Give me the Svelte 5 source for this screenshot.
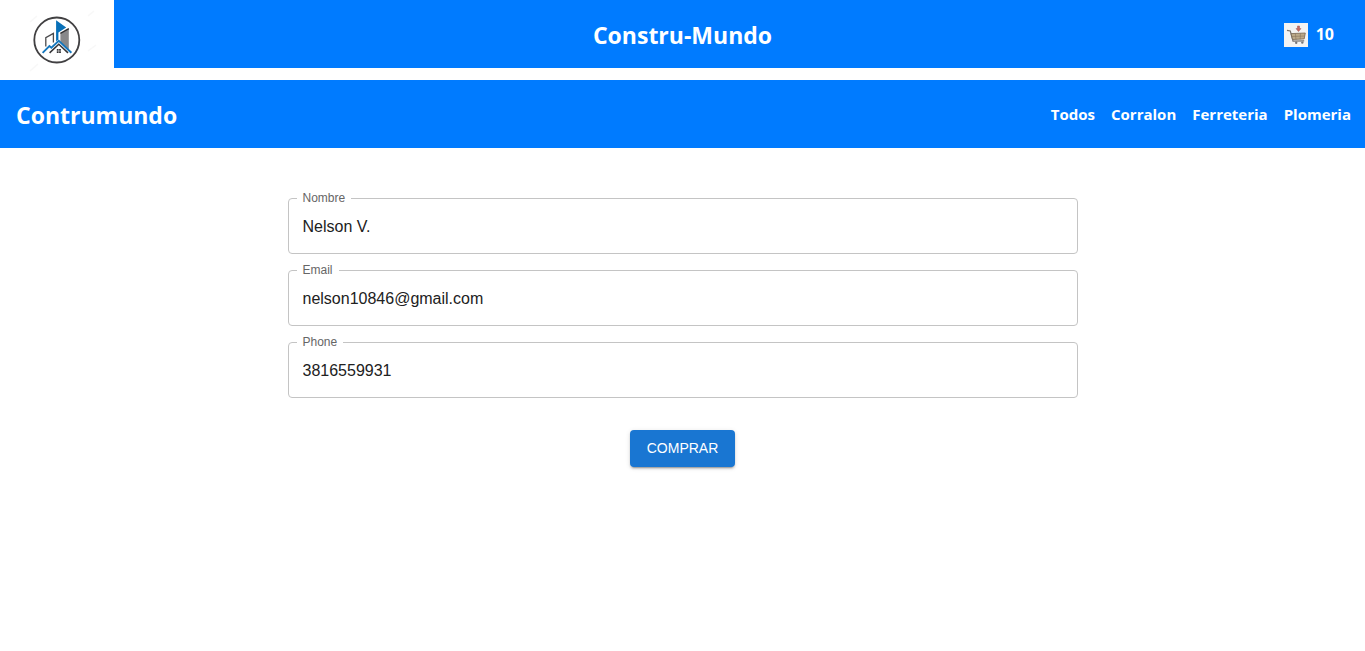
<script>
  let fields = $state([
    { id: 'nombre', label: 'Nombre', type: 'text', value: 'Nelson V.' },
    { id: 'email', label: 'Email', type: 'email', value: 'nelson10846@gmail.com' },
    { id: 'phone', label: 'Phone', type: 'tel', value: '3816559931' }
  ]);
  const categories = ['Todos', 'Corralon', 'Ferreteria', 'Plomeria'];
  const cartCount = 10;
</script>

<header class="topbar">
  <a class="logo" href="#inicio" aria-label="Inicio">
    <svg viewBox="0 0 114 80" width="114" height="80" fill="none">
      <g stroke="#f8f8f8" stroke-width="1.5">
        <path d="M30 22l7-6M88 51l8-6M30 71l8-7M88 16l6-5" />
      </g>
      <circle cx="56.8" cy="40" r="22.5" stroke="#414042" stroke-width="1.8" />
      <path d="M45.8 46.5V37.6L53.4 33.4V42.5" stroke="#4b4b4d" stroke-width="1.3" />
      <path d="M60.4 41V33.2L68.8 28.4V50.2L60.4 42.4Z" fill="#88888a" />
      <path d="M60.4 33.4L68.8 28.6" stroke="#303033" stroke-width="1.3" />
      <path d="M56.1 20.2L66.2 27.6L58.4 32.4V39.6L56.1 41.6Z" fill="#0870b8" />
      <path d="M42.6 52.8L49.4 46L51.4 47.8L58.8 40.8L71.4 52.8" stroke="#1677bd" stroke-width="1.9" />
      <path d="M49.6 52.9L58.8 44.2L68 52.9" stroke="#343437" stroke-width="1.5" />
      <path d="M56.8 49h1.8v1.7h-1.8zM59.1 49h1.8v1.7h-1.8zM56.8 51.2h1.8v1.7h-1.8zM59.1 51.2h1.8v1.7h-1.8z" fill="#343437" />
    </svg>
  </a>
  <h1>Constru-Mundo</h1>
  <a class="cart" href="#carrito" aria-label="Carrito">
    <svg viewBox="0 0 24 24" width="24" height="24" fill="none">
      <path d="M0 0h24v24H0z" fill="#f3f3f3" />
      <path d="M3 7.3L6.3 8L9 18.2L20.2 17.8" stroke="#77716d" stroke-width="1.2" />
      <path d="M7 10.6L21.3 10L20.2 15.9L8.6 16.5Z" fill="#bba98a" stroke="#776754" stroke-width=".8" />
      <path d="M7.8 13.5L20.8 13M11.4 10.6l.6 6M16.4 10.4l-.2 6" stroke="#806c54" stroke-width=".5" />
      <path d="M13.5 3h2v2.6h1.5L14.5 8.6l-2.5-3h1.5z" fill="#c96861" stroke="#9e5654" stroke-width=".5" />
      <circle cx="12.2" cy="19.8" r="1.2" fill="#77777a" />
      <circle cx="18.3" cy="19.6" r="1.2" fill="#77777a" />
    </svg>
    <span>{cartCount}</span>
  </a>
</header>

<nav class="navbar">
  <h2>Contrumundo</h2>
  <ul>
    {#each categories as category}
      <li><a href={'#' + category.toLowerCase()}>{category}</a></li>
    {/each}
  </ul>
</nav>

<main>
  <form onsubmit={(e) => e.preventDefault()}>
    {#each fields as field}
      <div class="field">
        <label for={field.id}>{field.label}</label>
        <input id={field.id} type={field.type} bind:value={field.value} />
      </div>
    {/each}
    <button type="submit">COMPRAR</button>
  </form>
</main>

<style>
  :global(body) {
    margin: 0;
    background: #fff;
    font-family: "Open Sans", "Noto Sans", sans-serif;
  }
  .topbar {
    display: grid;
    grid-template-columns: 1fr auto 1fr;
    grid-template-rows: 68px;
    align-items: center;
    margin-bottom: 12px;
    background: #007bff;
    color: #fff;
  }
  .logo {
    align-self: start;
    justify-self: start;
    height: 80px;
    background: #fff;
  }
  .logo svg,
  .cart svg {
    display: block;
  }
  h1,
  h2 {
    margin: 0;
    padding-top: 2px;
    font-size: 23px;
    line-height: 34px;
    font-weight: 700;
  }
  .cart {
    justify-self: end;
    display: flex;
    align-items: center;
    gap: 8px;
    padding-right: 31px;
    color: inherit;
    font-size: 16px;
    line-height: 24px;
    font-weight: 700;
    text-decoration: none;
  }
  .cart svg {
    margin-top: 2px;
  }
  .navbar {
    display: flex;
    align-items: center;
    justify-content: space-between;
    padding: 16px 14px 16px 16px;
    background: #007bff;
    color: #fff;
  }
  ul {
    display: flex;
    gap: 16px;
    margin: 0;
    padding: 0;
    list-style: none;
  }
  li a {
    color: inherit;
    font-size: 15px;
    line-height: 24px;
    font-weight: 700;
    text-decoration: none;
  }
  main {
    padding: 50px 16px;
  }
  form {
    display: flex;
    flex-direction: column;
    gap: 16px;
    max-width: 790px;
    margin: 0 auto;
    font-family: "Liberation Sans", Arial, sans-serif;
  }
  .field {
    position: relative;
  }
  label {
    position: absolute;
    top: -8px;
    left: 9px;
    padding: 0 6px;
    background: #fff;
    color: #666;
    font-size: 12px;
    line-height: 16px;
  }
  input {
    display: block;
    box-sizing: border-box;
    width: 100%;
    height: 56px;
    padding: 2px 14px 0;
    border: 1px solid #c4c4c4;
    border-radius: 4px;
    background: transparent;
    color: #212121;
    font: inherit;
    font-size: 16px;
  }
  button {
    align-self: center;
    margin-top: 16px;
    padding: 6px 17px;
    border: 0;
    border-radius: 4px;
    background: #1976d2;
    box-shadow: 0 3px 1px -2px rgba(0, 0, 0, 0.2), 0 2px 2px 0 rgba(0, 0, 0, 0.14), 0 1px 5px 0 rgba(0, 0, 0, 0.12);
    color: #fff;
    font: inherit;
    font-size: 14px;
    line-height: 25px;
  }
</style>
